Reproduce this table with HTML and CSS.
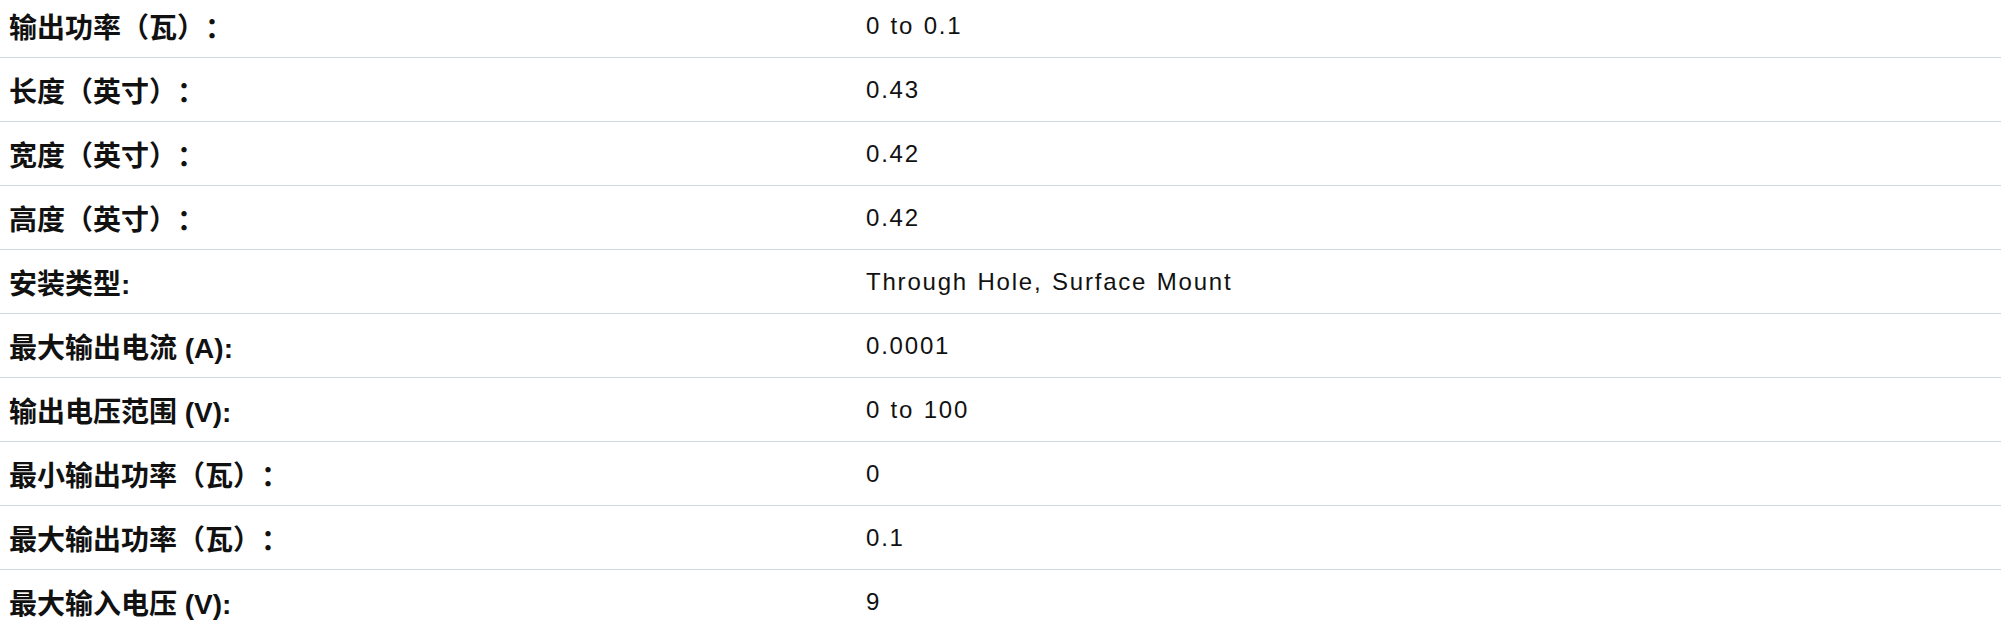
FILE: index.html
```html
<!DOCTYPE html>
<html lang="zh">
<head>
<meta charset="utf-8">
<title>Specs</title>
<link rel="stylesheet" href="styles.css">
</head>
<body>
<div class="specs">
  <div class="row"><div class="label">输出功率（瓦）：</div><div class="value">0 to 0.1</div></div>
  <div class="row"><div class="label">长度（英寸）：</div><div class="value">0.43</div></div>
  <div class="row"><div class="label">宽度（英寸）：</div><div class="value">0.42</div></div>
  <div class="row"><div class="label">高度（英寸）：</div><div class="value">0.42</div></div>
  <div class="row"><div class="label">安装类型:</div><div class="value">Through Hole, Surface Mount</div></div>
  <div class="row"><div class="label">最大输出电流 (A):</div><div class="value">0.0001</div></div>
  <div class="row"><div class="label">输出电压范围 (V):</div><div class="value">0 to 100</div></div>
  <div class="row"><div class="label">最小输出功率（瓦）：</div><div class="value">0</div></div>
  <div class="row"><div class="label">最大输出功率（瓦）：</div><div class="value">0.1</div></div>
  <div class="row"><div class="label">最大输入电压 (V):</div><div class="value">9</div></div>
</div>
</body>
</html>
```
FILE: styles.css
```css
html, body {
  margin: 0;
  padding: 0;
  background: #ffffff;
}
body {
  overflow: hidden;
  font-family: "Liberation Sans", Arial, "Noto Sans CJK SC", sans-serif;
  color: #111111;
}
.specs {
  margin-top: -6px;
}
.row {
  display: grid;
  grid-template-columns: 858px 1fr;
  height: 63px;
  border-bottom: 1px solid #cfd7de;
  align-items: center;
}
.row:last-child {
  border-bottom: none;
}
.label {
  padding-left: 9px;
  font-weight: bold;
  font-size: 28px;
  text-spacing-trim: space-all;
}
.value {
  padding-left: 8px;
  font-size: 24px;
  letter-spacing: 1.8px;
  word-spacing: 1px;
}
```
